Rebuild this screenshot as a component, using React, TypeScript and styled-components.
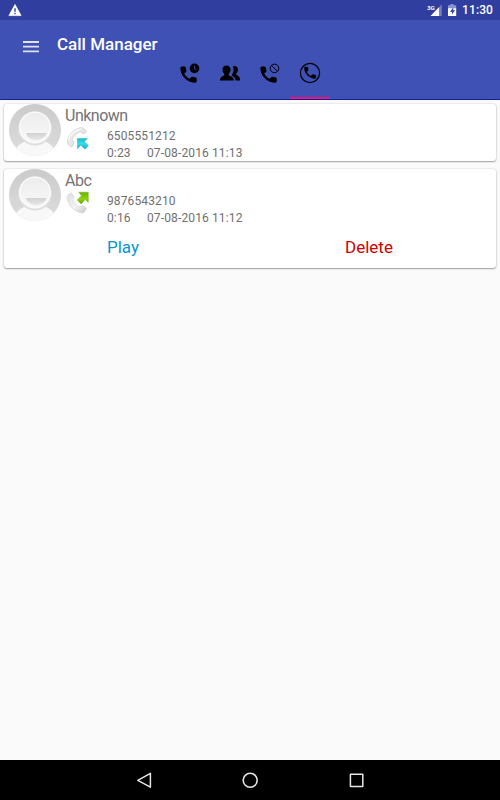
import React from "react";
import styled, { createGlobalStyle } from "styled-components";

const GlobalStyle = createGlobalStyle`
  *, *::before, *::after { box-sizing: border-box; }
  body { margin: 0; background: #fafafa; font-family: Roboto, sans-serif; }
  svg { display: block; flex: none; }
`;

const Screen = styled.div`
  width: 500px;
  height: 800px;
  display: flex;
  flex-direction: column;
  overflow: hidden;
  background: #fafafa;
`;

const StatusBar = styled.div`
  height: 20px;
  flex: none;
  display: flex;
  align-items: center;
  justify-content: space-between;
  padding: 0 7px 0 8px;
  background: #303f9f;
  color: #fff;
`;

const StatusIcons = styled.div`
  display: flex;
  align-items: center;
`;

const Clock = styled.span`
  margin-left: 5px;
  font-size: 12px;
  line-height: 20px;
  font-weight: 500;
  letter-spacing: 0.1px;
`;

const Header = styled.header`
  height: 80px;
  flex: none;
  display: flex;
  flex-direction: column;
  background: #3f51b5;
  border-bottom: 1px solid #0a249b;
`;

const TitleRow = styled.div`
  height: 39px;
  display: flex;
  align-items: flex-start;
  gap: 18px;
  padding: 14px 0 0 23px;
`;

const MenuButton = styled.button`
  border: 0;
  padding: 7px 0 0;
  background: none;
`;

const Title = styled.h1`
  margin: 0;
  font-size: 17px;
  line-height: 20px;
  font-weight: 500;
  color: #fff;
`;

const Tabs = styled.nav`
  flex: 1;
  display: flex;
  justify-content: center;
`;

const Tab = styled.button<{ $active?: boolean }>`
  width: 40px;
  display: flex;
  justify-content: center;
  padding: 2px 0 0;
  border: 0;
  border-bottom: 2px solid ${(p) => (p.$active ? "#e5177b" : "transparent")};
  background: none;
`;

const CallList = styled.main`
  flex: 1;
  display: flex;
  flex-direction: column;
  gap: 8px;
  padding: 4px 4px 0;
`;

const Card = styled.article<{ $expanded?: boolean }>`
  height: ${(p) => (p.$expanded ? 99 : 57)}px;
  display: flex;
  gap: 4px;
  padding: 0 5px;
  background: #fff;
  border-radius: 3px;
  box-shadow: 0 0 2px rgba(0, 0, 0, 0.2), 0 1px 1.5px rgba(0, 0, 0, 0.32);
`;

const Details = styled.div`
  flex: 1;
  display: flex;
  flex-direction: column;
`;

const Name = styled.div`
  height: 22px;
  font-size: 16px;
  line-height: 24px;
  letter-spacing: -0.5px;
  color: #737373;
`;

const CallRow = styled.div`
  display: flex;
  gap: 18px;
`;

const CallInfo = styled.div`
  padding-top: 2px;
  font-size: 12px;
  line-height: 17px;
  letter-spacing: 0.13px;
  color: #707070;
`;

const Meta = styled.div`
  display: flex;
`;

const Duration = styled.span`
  width: 40px;
`;

const Actions = styled.div`
  display: flex;
  padding: 9px 0 0 42px;
`;

const Action = styled.button<{ $danger?: boolean }>`
  width: 238px;
  padding: 0;
  border: 0;
  background: none;
  text-align: left;
  font: 400 17px/22px Roboto, sans-serif;
  color: ${(p) => (p.$danger ? "#cc0000" : "#0895cc")};
`;

const NavBar = styled.footer`
  height: 40px;
  flex: none;
  display: flex;
  align-items: center;
  justify-content: center;
  gap: 82px;
  background: #000;
`;

const HANDSET =
  "M6.62 10.79c1.44 2.83 3.76 5.14 6.59 6.59l2.2-2.2c.27-.27.67-.36 1.02-.24 1.12.37 2.33.57 3.57.57.55 0 1 .45 1 1V20c0 .55-.45 1-1 1-9.39 0-17-7.61-17-17 0-.55.45-1 1-1h3.5c.55 0 1 .45 1 1 0 1.25.2 2.45.57 3.57.11.35.03.74-.25 1.02l-2.2 2.2z";

const WarningIcon = () => (
  <svg width="14" height="14" viewBox="0 0 14 14">
    <path d="M7 1.4 13.1 12.6H.9z" fill="#fff" stroke="#fff" strokeWidth=".7" strokeLinejoin="round" />
    <path d="M6.2 5.2h1.6v3.6H6.2zM6.2 9.8h1.6v1.5H6.2z" fill="#4b59ab" />
  </svg>
);

const SignalIcon = () => (
  <svg width="16" height="14" viewBox="0 0 16 14">
    <path d="M14.700 1.500V13H3.500z" fill="#7782c3" />
    <path d="M12 4.300V13H3.500z" fill="#fff" />
    <text x="0" y="6.500" fontFamily="Roboto, sans-serif" fontSize="6.200" fontWeight="700" fill="#fff">3G</text>
  </svg>
);

const BatteryIcon = () => (
  <svg width="14" height="14" viewBox="0 0 14 14">
    <path d="M5 2.200h2.400V1h3.200v1.200h2.600v3.300H5z" fill="#8a94cc" />
    <path d="M5 5.200h8.200V13H5z" fill="#fff" />
    <path d="M10.300 4.500 6.900 8.800h2v2.800l3.200-4.400h-1.900z" fill="#303f9f" />
  </svg>
);

const MenuIcon = () => (
  <svg width="16" height="12" viewBox="0 0 16 12">
    <path d="M0 1h16M0 5.700h16M0 10.400h16" stroke="#e0e3f3" strokeWidth="1.800" />
  </svg>
);

const RecentIcon = () => (
  <svg width="24" height="24" viewBox="0 0 24 24">
    <path d={HANDSET} transform="translate(.2 3.300) scale(.86)" stroke="#000" strokeWidth="1" />
    <circle cx="16.500" cy="7.400" r="4.800" />
    <path d="M16.600 4.600v3l2 1.300" fill="none" stroke="#3f51b5" strokeWidth=".9" />
  </svg>
);

const ContactsIcon = () => (
  <svg width="24" height="24" viewBox="0 0 24 24">
    <path d="M14.8 5.500c2-1.400 5.100-.3 5.100 2.800 0 1.800-.4 3.200-1.600 4.200v1.600c1.500.8 3.800 1.100 3.800 5.300h-4.500c-.1-2.600-1.800-3.800-3.800-4.700.4-.5.500-1 .5-1.900 1.500-1.800 1.800-4.800.5-7.300z" />
    <path d="M8.500 4.400c2.500 0 4.100 1.700 4.100 4.200 0 1.800-.6 3.200-1.800 4.200v1.800c1.900.8 5 1.200 5 4.800H2c0-3.600 2.500-4 4.300-4.800v-1.800c-1.200-1-1.900-2.400-1.900-4.200 0-2.500 1.600-4.200 4.100-4.200z" />
  </svg>
);

const BlockedIcon = () => (
  <svg width="24" height="24" viewBox="0 0 24 24">
    <path d={HANDSET} transform="translate(.2 3.300) scale(.86)" stroke="#000" strokeWidth="1" />
    <circle cx="16.500" cy="7.400" r="4.300" fill="none" stroke="#000" />
    <path d="m13.500 4.400 6 6" stroke="#000" />
  </svg>
);

const RecordedIcon = () => (
  <svg width="24" height="24" viewBox="0 0 24 24">
    <circle cx="12" cy="12" r="9.600" fill="none" stroke="#000" strokeWidth="1.200" />
    <path d={HANDSET} transform="translate(4.400 4) scale(.64)" stroke="#000" strokeWidth=".6" />
  </svg>
);

const Avatar = () => (
  <svg width="52" height="52" viewBox="0 0 52 52">
    <defs>
      <clipPath id="avatar-clip"><circle cx="26" cy="26" r="26" /></clipPath>
      <linearGradient id="avatar-bg" x2="0" y2="1">
        <stop stopColor="#cbcbcb" /><stop offset="1" stopColor="#dddddd" />
      </linearGradient>
      <linearGradient id="avatar-face" x2="0" y2="1">
        <stop stopColor="#ededed" /><stop offset="1" stopColor="#f8f8f8" />
      </linearGradient>
      <linearGradient id="avatar-smile" x2="0" y2="1">
        <stop stopColor="#d2d2d2" /><stop offset="1" stopColor="#e7e7e7" />
      </linearGradient>
    </defs>
    <g clipPath="url(#avatar-clip)">
      <rect width="52" height="52" fill="url(#avatar-bg)" />
      <path d="M5 48c2-5 6-8.500 12-11h18c6 2.500 10 6 12 11v5H5z" fill="#f8f8f8" />
      <circle cx="26" cy="24.500" r="17" fill="#dedede" />
      <circle cx="26" cy="23.500" r="16" fill="#fcfcfc" />
      <circle cx="26" cy="23.500" r="14.700" fill="url(#avatar-face)" />
      <path d="M17 29h20.500c-1 4.300-5.300 7-10.200 7S18 33.300 17 29z" fill="url(#avatar-smile)" />
    </g>
  </svg>
);

const IncomingIcon = () => (
  <svg width="24" height="24" viewBox="0 0 24 24">
    <defs>
      <linearGradient id="in-phone" x2="1" y2="1">
        <stop stopColor="#f5f5f5" /><stop offset="1" stopColor="#d9d9d9" />
      </linearGradient>
      <linearGradient id="in-arrow" x2="0" y2="1">
        <stop stopColor="#10bfd0" /><stop offset=".5" stopColor="#3ddcea" /><stop offset="1" stopColor="#16a9be" />
      </linearGradient>
    </defs>
    <path d="M2.500 15C3 8.500 9.500 2.500 16 1.700q1.600-.2 2.800.9l2.300 2.500q.7 1-.5 1.700l-2 .8q-1 .2-1.800-.6l-1-1.200C12 6.500 8.300 10 7 13.700l1.500 1.400q.9.800.4 1.800l-1.500 3.400q-.8 1-1.900.2l-2.200-2.300Q2.300 17 2.500 15z" fill="url(#in-phone)" stroke="#cacaca" strokeWidth=".7" />
    <path d="M3.400 14.300C4 9 10 3.700 16.200 2.800" fill="none" stroke="#fafafa" strokeWidth="1.200" />
    <path d="M12.400 12.400h10.200l-3.200 3.200 4 4-3.500 3.600-4-4-3.500 3.500z" fill="url(#in-arrow)" stroke="#13aec0" strokeWidth=".4" />
  </svg>
);

const OutgoingIcon = () => (
  <svg width="24" height="24" viewBox="0 0 24 24">
    <defs>
      <linearGradient id="out-phone" x2="1" y2="1">
        <stop stopColor="#dedede" /><stop offset=".55" stopColor="#f3f3f3" /><stop offset="1" stopColor="#c8c8c8" />
      </linearGradient>
      <linearGradient id="out-arrow" x2="0" y2="1">
        <stop stopColor="#6eb400" /><stop offset=".6" stopColor="#8fd40b" /><stop offset="1" stopColor="#5ea300" />
      </linearGradient>
    </defs>
    <path d="M2.200 6.300c0-1.600 1.700-3.400 3.400-4.100q1-.4 1.600.6l1.900 3.200q.5.900-.4 1.600L7.500 8.700c1.200 3.300 4 6.200 7.300 7.400l1.200-1.200q.8-.8 1.700-.2l3.200 2.100q.9.700.3 1.700l-2 2.500q-1.100 1.300-2.900.8C8.500 20.300 2.100 13 2.200 6.300z" fill="url(#out-phone)" stroke="#d3d3d3" strokeWidth=".7" />
    <path d="M13.700 1.200h9.600v10.200l-3-2.800-4.200 4.300-3.900-3.900 4.300-4.300z" fill="url(#out-arrow)" stroke="#65aa00" strokeWidth=".4" />
  </svg>
);

const BackIcon = () => (
  <svg width="24" height="24" viewBox="0 0 24 24">
    <path d="M18.400 5.400v13.800L5.800 12.300z" fill="none" stroke="#e6e6e6" strokeWidth="1.500" strokeLinejoin="round" />
  </svg>
);

const HomeIcon = () => (
  <svg width="24" height="24" viewBox="0 0 24 24">
    <circle cx="12.200" cy="12.300" r="7" fill="none" stroke="#e6e6e6" strokeWidth="1.600" />
  </svg>
);

const OverviewIcon = () => (
  <svg width="24" height="24" viewBox="0 0 24 24">
    <rect x="6.400" y="6.200" width="12.400" height="12.400" rx=".4" fill="none" stroke="#e6e6e6" strokeWidth="1.500" />
  </svg>
);

type Call = {
  name: string;
  number: string;
  duration: string;
  date: string;
  outgoing?: boolean;
  expanded?: boolean;
};

const calls: Call[] = [
  { name: "Unknown", number: "6505551212", duration: "0:23", date: "07-08-2016 11:13" },
  { name: "Abc", number: "9876543210", duration: "0:16", date: "07-08-2016 11:12", outgoing: true, expanded: true },
];

const CallCard = ({ call }: { call: Call }) => (
  <Card $expanded={call.expanded}>
    <Avatar />
    <Details>
      <Name>{call.name}</Name>
      <CallRow>
        {call.outgoing ? <OutgoingIcon /> : <IncomingIcon />}
        <CallInfo>
          <div>{call.number}</div>
          <Meta>
            <Duration>{call.duration}</Duration>
            <span>{call.date}</span>
          </Meta>
        </CallInfo>
      </CallRow>
      {call.expanded && (
        <Actions>
          <Action>Play</Action>
          <Action $danger>Delete</Action>
        </Actions>
      )}
    </Details>
  </Card>
);

export default function App() {
  return (
    <Screen>
      <GlobalStyle />
      <StatusBar>
        <WarningIcon />
        <StatusIcons>
          <SignalIcon />
          <BatteryIcon />
          <Clock>11:30</Clock>
        </StatusIcons>
      </StatusBar>
      <Header>
        <TitleRow>
          <MenuButton aria-label="Menu"><MenuIcon /></MenuButton>
          <Title>Call Manager</Title>
        </TitleRow>
        <Tabs>
          <Tab aria-label="Recent"><RecentIcon /></Tab>
          <Tab aria-label="Contacts"><ContactsIcon /></Tab>
          <Tab aria-label="Blocked"><BlockedIcon /></Tab>
          <Tab aria-label="Recorded" $active><RecordedIcon /></Tab>
        </Tabs>
      </Header>
      <CallList>
        {calls.map((call) => <CallCard key={call.number} call={call} />)}
      </CallList>
      <NavBar>
        <BackIcon />
        <HomeIcon />
        <OverviewIcon />
      </NavBar>
    </Screen>
  );
}
